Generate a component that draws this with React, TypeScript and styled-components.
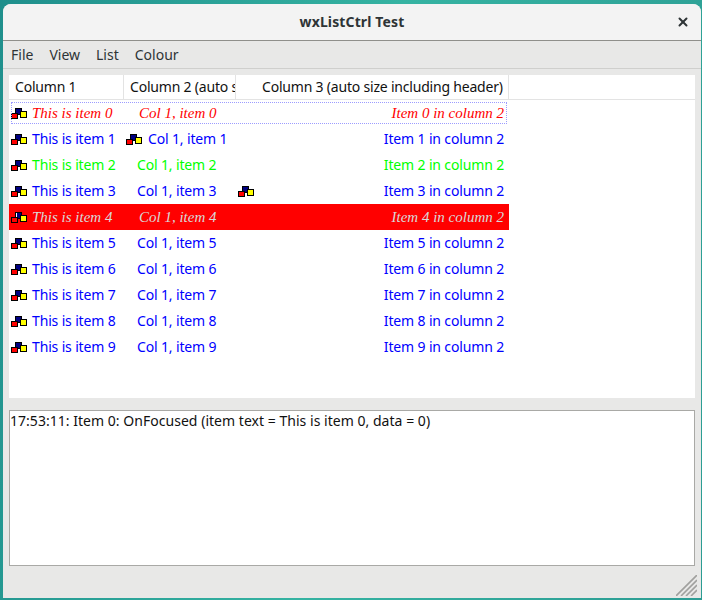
import styled, { createGlobalStyle } from 'styled-components'
import { X } from 'lucide-react'

const GlobalStyle = createGlobalStyle`
  html, body {
    margin: 0;
    padding: 0;
    background: #2a9d94;
  }
`

const Desktop = styled.div`
  width: 702px;
  height: 600px;
  box-sizing: border-box;
  padding: 4px 1px 2px 3px;
  background: linear-gradient(100deg, #1f8f8c 0%, #35b3a2 50%, #2c9c93 100%);
  overflow: hidden;
  font-family: "Noto Sans", sans-serif;
`

const Window = styled.div`
  height: 100%;
  display: flex;
  flex-direction: column;
  background: #e8e8e7;
  border-radius: 8px 8px 0 0;
  overflow: hidden;
`

const TitleBar = styled.div`
  height: 37px;
  flex: none;
  box-sizing: border-box;
  display: flex;
  align-items: center;
  justify-content: center;
  position: relative;
  background: #f3f3f3;
  border-bottom: 1px solid #8f8f8b;
  color: #2e3436;
  font-size: 14px;
  font-weight: 700;
  letter-spacing: 0.13px;
  padding-bottom: 2px;
`

const CloseButton = styled.span`
  position: absolute;
  right: 11px;
  top: 11px;
  display: flex;
  color: #2e3436;
`

const MenuBar = styled.div`
  height: 27px;
  flex: none;
  display: flex;
  align-items: center;
  gap: 16px;
  padding-left: 8px;
  background: #e8e8e7;
  border-bottom: 1px solid #cfcfcd;
  color: #2e3436;
  font-size: 14px;
`

const Content = styled.div`
  flex: 1;
  display: flex;
  flex-direction: column;
  padding: 6px 6px 0 6px;
  position: relative;
`

const ListPanel = styled.div`
  height: 323px;
  flex: none;
  background: #fff;
`

const Header = styled.div`
  height: 24px;
  display: grid;
  grid-template-columns: 115px 112px 273px;
  border-bottom: 1px solid #e3e3e3;
`

const HeaderCell = styled.div<{ $indent: number }>`
  display: flex;
  align-items: center;
  padding: 0 0 2px ${p => p.$indent}px;
  border-right: 1px solid #e3e3e3;
  color: #111;
  font-size: 14px;
  letter-spacing: -0.2px;
  white-space: nowrap;
  overflow: hidden;
`

const Row = styled.div<{ $serif?: boolean; $selected?: boolean; $color: string }>`
  width: 500px;
  height: 26px;
  box-sizing: border-box;
  display: grid;
  grid-template-columns: 115px 113px 272px;
  align-items: center;
  position: relative;
  color: ${p => p.$color};
  background: ${p => (p.$selected ? '#ff0000' : 'transparent')};
  font-family: ${p => (p.$serif ? '"Liberation Serif", serif' : 'inherit')};
  font-style: ${p => (p.$serif ? 'italic' : 'normal')};
  font-size: ${p => (p.$serif ? '15px' : '14px')};
  letter-spacing: ${p => (p.$serif ? '0' : '-0.15px')};
`

const FocusRing = styled.span`
  position: absolute;
  left: 2px;
  right: 2px;
  top: 2px;
  bottom: 2px;
  border: 1px dotted #9c9cff;
`

const Cell = styled.div<{ $indent: number }>`
  display: flex;
  align-items: center;
  padding-left: ${p => p.$indent}px;
  white-space: nowrap;
`

const EndCell = styled.div<{ $withIcon?: boolean }>`
  display: flex;
  align-items: center;
  justify-content: ${p => (p.$withIcon ? 'space-between' : 'flex-end')};
  padding: 0 5px 0 1px;
  white-space: nowrap;
`

const Label = styled.span<{ $lift: boolean }>`
  padding-bottom: ${p => (p.$lift ? 2 : 0)}px;
`

const IconSlot = styled.svg<{ $gap: number }>`
  width: 16px;
  height: 11px;
  flex: none;
  margin: 1px ${p => p.$gap}px 0 0;
`

const LogBox = styled.div`
  margin-top: 12px;
  height: 156px;
  box-sizing: border-box;
  background: #fff;
  border: 1px solid #a9a9a6;
  color: #111;
  font-size: 14px;
  letter-spacing: 0.03px;
  line-height: 20px;
`

const Grip = styled.svg`
  position: absolute;
  right: 4px;
  bottom: 2px;
  width: 21px;
  height: 21px;
`

function ListIcon({ selected, gap = 5 }: { selected?: boolean; gap?: number }) {
  return (
    <IconSlot $gap={gap} viewBox="0 0 16 11">
      <rect x="4.5" y="0.5" width="6" height="6" fill="#000080" stroke="#000" />
      {selected && <rect x="5" y="1" width="1" height="4" fill="#fff" />}
      <rect x="0.5" y="5.5" width="6" height="5" fill="#ff0000" stroke="#000" />
      <rect x="9.5" y="3.5" width="6" height="6" fill="#ffff00" stroke="#000" />
    </IconSlot>
  )
}

const ITEMS = [0, 1, 2, 3, 4, 5, 6, 7, 8, 9]

function itemColor(i: number) {
  if (i === 0) return '#ff0000'
  if (i === 2) return '#00ff00'
  if (i === 4) return '#d8d8d8'
  return '#0000ff'
}

export default function App() {
  return (
    <Desktop>
      <GlobalStyle />
      <Window>
        <TitleBar>
          wxListCtrl Test
          <CloseButton>
            <X size={14} strokeWidth={3.4} />
          </CloseButton>
        </TitleBar>
        <MenuBar>
          <span>File</span>
          <span>View</span>
          <span>List</span>
          <span>Colour</span>
        </MenuBar>
        <Content>
          <ListPanel>
            <Header>
              <HeaderCell $indent={6}>Column 1</HeaderCell>
              <HeaderCell $indent={6}>Column 2 (auto size first)</HeaderCell>
              <HeaderCell $indent={26}>Column 3 (auto size including header)</HeaderCell>
            </Header>
            {ITEMS.map(i => {
              const serif = i === 0 || i === 4
              return (
                <Row key={i} $color={itemColor(i)} $serif={serif} $selected={i === 4}>
                  {i === 0 && <FocusRing />}
                  <Cell $indent={2}>
                    <ListIcon selected={i === 4} />
                    <Label $lift={!serif}>This is item {i}</Label>
                  </Cell>
                  <Cell $indent={i === 1 ? 2 : serif ? 15 : 13}>
                    {i === 1 && <ListIcon gap={6} />}
                    <Label $lift={!serif}>Col 1, item {i}</Label>
                  </Cell>
                  <EndCell $withIcon={i === 3}>
                    {i === 3 && <ListIcon />}
                    <Label $lift={!serif}>Item {i} in column 2</Label>
                  </EndCell>
                </Row>
              )
            })}
          </ListPanel>
          <LogBox>17:53:11: Item 0: OnFocused (item text = This is item 0, data = 0)</LogBox>
          <Grip viewBox="0 0 21 21">
            <path d="M0 21 L21 0 M5 21 L21 5 M10 21 L21 10 M15 21 L21 15" stroke="#a0a09e" strokeWidth="1.6" fill="none" />
          </Grip>
        </Content>
      </Window>
    </Desktop>
  )
}
